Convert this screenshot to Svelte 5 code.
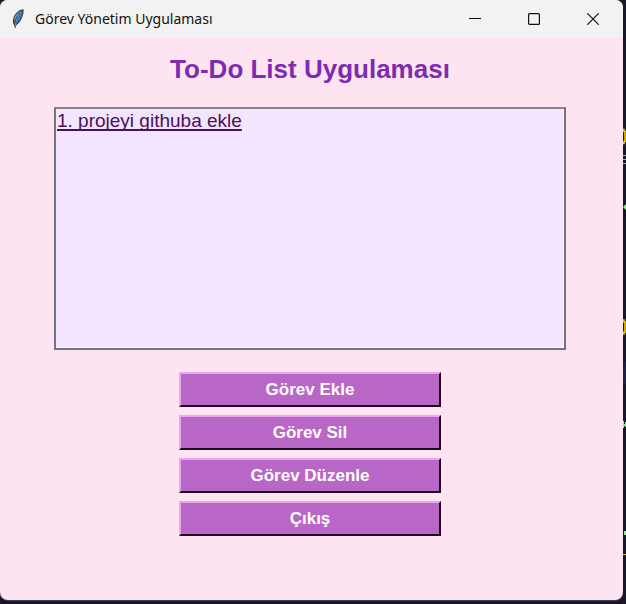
<script>
  let tasks = $state(['1. projeyi githuba ekle']);
  const actions = ['Görev Ekle', 'Görev Sil', 'Görev Düzenle', 'Çıkış'];
</script>

<div class="desktop">
  <svg class="backdrop" width="3" height="604" viewBox="0 0 3 604" aria-hidden="true">
    <rect width="3" height="604" fill="#17172b" />
    <rect y="362" width="3" height="22" fill="#1d2145" />
    <path d="M0 129.500h1v2h1v10h-1v2h-1M0 320h1v2h1v10h-1v2h-1" fill="none" stroke="#ffd500" stroke-width="1.500" />
    <path d="M0 155.500h3M0 159.500h3M0 163.500h3" stroke="#c9ad52" />
    <path d="M3 204l-3 3 3 3zM0 421h1v3h1v-2h1v5h-1v-1h-1v2h-1zM1 531h2v4h-2z" fill="#98ee90" />
    <path d="M0 554.500h3" stroke="#e8bd20" />
  </svg>

  <div class="window">
    <header>
      <svg class="feather" width="14" height="20" viewBox="0 0 14 20" aria-hidden="true">
        <path d="M12.500.3C9 .3 4.500 3.500 2.500 8.500 1.500 11 1.600 14 3 16l1.200 3.500L5.500 16C9 14.500 13.500 6 12.500.3z" fill="#3b3e44" />
        <path d="M11.600 1.500C8 5 5.500 9 4.700 15 8.500 13 12 6.500 11.600 1.500z" fill="#3273bd" />
        <path d="M10.600 1.600C6.500 3.500 2.700 8 3.100 13 4.500 9 7.500 4.500 10.600 1.600z" fill="#8fa9c2" />
        <path d="M10.500 3C7 7 5 11 4.200 17" fill="none" stroke="#5aa0e6" stroke-width=".9" />
      </svg>
      <span class="caption">Görev Yönetim Uygulaması</span>
      <div class="controls">
        <button aria-label="Simge durumuna küçült">
          <svg width="12" height="12" viewBox="0 0 12 12"><path d="M0 5.500h12" stroke="#111" /></svg>
        </button>
        <button aria-label="Ekranı kapla">
          <svg width="12" height="12" viewBox="0 0 12 12"><rect x=".6" y=".6" width="10.800" height="10.800" rx="1" fill="none" stroke="#111" stroke-width="1.200" /></svg>
        </button>
        <button aria-label="Kapat">
          <svg width="12" height="12" viewBox="0 0 12 12"><path d="M.3.3l11.400 11.400M11.700.3L.3 11.700" stroke="#111" stroke-width="1.200" /></svg>
        </button>
      </div>
    </header>

    <main>
      <h1 id="list-title">To-Do List Uygulaması</h1>
      <select size="10" aria-labelledby="list-title">
        {#each tasks as task}
          <option>{task}</option>
        {/each}
      </select>
      <div class="actions">
        {#each actions as action}
          <button>{action}</button>
        {/each}
      </div>
    </main>
  </div>
</div>

<style>
  .desktop {
    position: relative;
    box-sizing: border-box;
    min-height: 100vh;
    padding: 0 3px 4px 0;
    display: flex;
    overflow: hidden;
    background: #17172b;
  }
  .backdrop {
    position: absolute;
    top: 0;
    right: 0;
  }
  .window {
    flex: 1;
    display: flex;
    flex-direction: column;
    overflow: hidden;
    border-radius: 8px;
    background: #fee4f0;
    box-shadow: 0 0 0 1px #454052;
  }
  header {
    display: flex;
    align-items: center;
    height: 38px;
    padding: 0 1px 0 11px;
    background: #f2f2f2;
  }
  .feather {
    margin-right: 10px;
  }
  .caption {
    flex: 1;
    font: 14px/20px "Noto Sans", "Open Sans", sans-serif;
    color: #111;
    white-space: nowrap;
  }
  .controls {
    display: flex;
  }
  .controls button {
    display: flex;
    align-items: center;
    justify-content: center;
    width: 59px;
    height: 38px;
    padding: 0;
    border: 0;
    background: none;
  }
  main {
    display: flex;
    flex-direction: column;
    align-items: center;
    padding: 15px 57px 24px 54px;
    font-family: "Liberation Sans", Arial, sans-serif;
  }
  h1 {
    margin: 0 0 22px;
    font-size: 26px;
    line-height: 32px;
    font-weight: bold;
    color: #7e2bb4;
  }
  select {
    box-sizing: border-box;
    width: 100%;
    height: 243px;
    padding: 0;
    border: 2px solid;
    border-color: #8b858d #77717c #77717c #77717c;
    border-radius: 0;
    outline: 0;
    background: #f3e5ff;
    box-shadow: inset -1px -1px #fff;
    overflow: hidden;
    font: 19px/24px "Liberation Sans", Arial, sans-serif;
  }
  option {
    height: 24px;
    min-height: 0;
    padding: 1px 1px 0;
    box-sizing: border-box;
    overflow: hidden;
    color: #4c1058;
    text-decoration: underline;
    text-decoration-thickness: 2px;
    text-underline-offset: 2px;
    text-decoration-skip-ink: none;
  }
  .actions {
    display: flex;
    flex-direction: column;
    gap: 8px;
    width: 262px;
    margin-top: 22px;
  }
  .actions button {
    height: 35px;
    padding: 0;
    border: 2px solid;
    border-color: #e9a5f0 #1c0c20 #1c0c20 #e9a5f0;
    border-radius: 0;
    background: #b967c7;
    color: #fff;
    font: bold 17px/20px "Liberation Sans", Arial, sans-serif;
  }
</style>
